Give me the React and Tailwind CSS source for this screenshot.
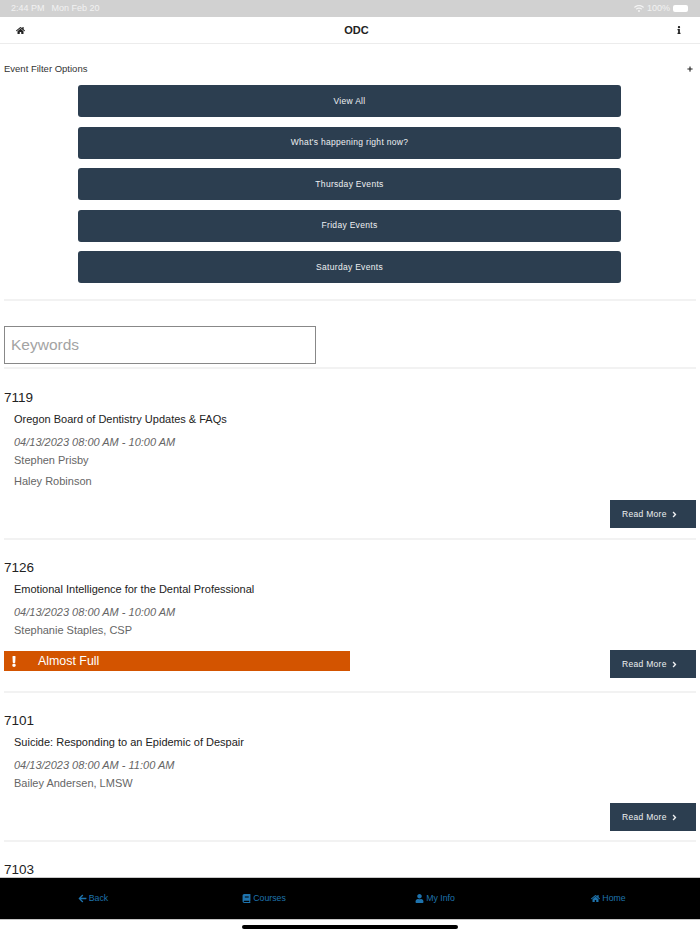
import { FaHome, FaInfo, FaPlus, FaExclamation, FaArrowLeft, FaBook, FaUser, FaAngleRight, FaWifi } from 'react-icons/fa';

const filters = ['View All', "What's happening right now?", 'Thursday Events', 'Friday Events', 'Saturday Events'];

const events = [
  { id: '7119', title: 'Oregon Board of Dentistry Updates & FAQs', time: '04/13/2023 08:00 AM - 10:00 AM', people: ['Stephen Prisby', 'Haley Robinson'], box: 'h-[171px] pt-[20px]', pb: 'mb-[10px]' },
  { id: '7126', title: 'Emotional Intelligence for the Dental Professional', time: '04/13/2023 08:00 AM - 10:00 AM', people: ['Stephanie Staples, CSP'], almostFull: true, box: 'h-[153px] pt-[19px]', pb: 'mb-[13px]' },
  { id: '7101', title: 'Suicide: Responding to an Epidemic of Despair', time: '04/13/2023 08:00 AM - 11:00 AM', people: ['Bailey Andersen, LMSW'], box: 'h-[149px] pt-[19px]', pb: 'mb-[9px]' },
];

function EventRow({ event }) {
  return (
    <div className={`mx-1 flex flex-col border-b-2 border-[#f2f2f2] ${event.box}`}>
      <div className="text-[13.5px] leading-[17px] text-[#222]">{event.id}</div>
      <div className="mt-[5px] ml-[10px] text-[11px] leading-[16px] text-[#222]">{event.title}</div>
      <div className="mt-[7px] ml-[10px] text-[11px] italic leading-[16px] text-[#666]">{event.time}</div>
      <div className="mt-[2px] ml-[10px] flex flex-col gap-[5px]">
        {event.people.map((p) => (
          <div key={p} className="text-[11px] leading-[16px] text-[#666]">{p}</div>
        ))}
      </div>
      <div className={`mt-auto flex items-end justify-between ${event.pb}`}>
        {event.almostFull ? (
          <div className="mb-[7px] flex h-[20px] w-[346px] items-center bg-[#d35400] text-white">
            <FaExclamation className="ml-[7px] h-[11px] w-[6px]" />
            <span className="ml-[21px] text-[12.4px]">Almost Full</span>
          </div>
        ) : <div />}
        <button className="flex h-[28px] w-[86px] items-center bg-[#2c3e50] pl-[12px] text-[8.5px] tracking-[0.3px] text-[#eef0f2]">
          Read More
          <FaAngleRight className="ml-[5px] h-[9px] w-[5px]" />
        </button>
      </div>
    </div>
  );
}

function NavLink({ icon: Icon, label, className }) {
  return (
    <div className={`flex items-center justify-center gap-[2px] text-[8.75px] text-[#1e73ad] ${className}`}>
      <Icon className="h-[9px] w-[9px]" />
      {label}
    </div>
  );
}

export default function App() {
  return (
    <div className="flex h-[934px] flex-col overflow-hidden bg-white font-['Liberation_Sans',Arial,sans-serif]">
      <div className="flex h-[17px] shrink-0 items-center justify-between bg-[#d1d1d1] pl-[11px] pr-[12px] text-[9px] text-[#f2f2f2]">
        <div className="flex gap-[7px]">
          <span>2:44 PM</span>
          <span>Mon Feb 20</span>
        </div>
        <div className="flex items-center gap-[3px]">
          <FaWifi className="h-[9px] w-[10px]" />
          <span>100%</span>
          <div className="h-[7px] w-[15px] rounded-[2px] bg-white" />
        </div>
      </div>

      <div className="flex h-[27px] shrink-0 items-center justify-between border-b border-[#ececec] pl-[16px] pr-[19px]">
        <FaHome className="h-[9px] w-[9px] text-[#222]" />
        <span className="ml-[11px] text-[11px] font-bold text-[#222]">ODC</span>
        <FaInfo className="h-[8px] w-[4px] text-[#222]" />
      </div>

      <div className="min-h-0 flex-1 overflow-hidden">
        <div className="mx-1 flex items-center justify-between pt-[18px]">
          <span className="text-[9.5px] leading-[13px] text-[#333]">Event Filter Options</span>
          <FaPlus className="mr-[3px] h-[6px] w-[6px] text-[#222]" />
        </div>

        <div className="mt-[10px] ml-[78px] flex w-[543px] flex-col gap-[9.6px]">
          {filters.map((f) => (
            <button key={f} className="h-[32px] rounded-[3px] bg-[#2c3e50] text-[8.5px] tracking-[0.3px] text-[#eef0f2]">
              {f}
            </button>
          ))}
        </div>

        <div className="mx-1 mt-[16px] h-[2px] bg-[#f2f2f2]" />

        <input
          className="mt-[25px] ml-1 block h-[38px] w-[312px] border border-[#888] px-[6px] text-[15.5px] text-[#222] outline-none placeholder:text-[#a3a3a3]"
          placeholder="Keywords"
        />

        <div className="mx-1 mt-[3px] h-[2px] bg-[#f2f2f2]" />

        {events.map((e) => (
          <EventRow key={e.id} event={e} />
        ))}

        <div className="mx-1 pt-[20px] text-[13.5px] leading-[16px] text-[#222]">7103</div>
      </div>

      <div className="flex h-[43px] shrink-0 items-center border-y border-[#c8c8c8] bg-black">
        <NavLink icon={FaArrowLeft} label="Back" className="w-[186px]" />
        <NavLink icon={FaBook} label="Courses" className="w-[156px]" />
        <NavLink icon={FaUser} label="My Info" className="w-[186px]" />
        <NavLink icon={FaHome} label="Home" className="w-[161px]" />
      </div>
      <div className="flex h-[14px] shrink-0 items-start justify-center bg-white pt-[5px]">
        <div className="h-[4px] w-[216px] rounded-full bg-black" />
      </div>
    </div>
  );
}
